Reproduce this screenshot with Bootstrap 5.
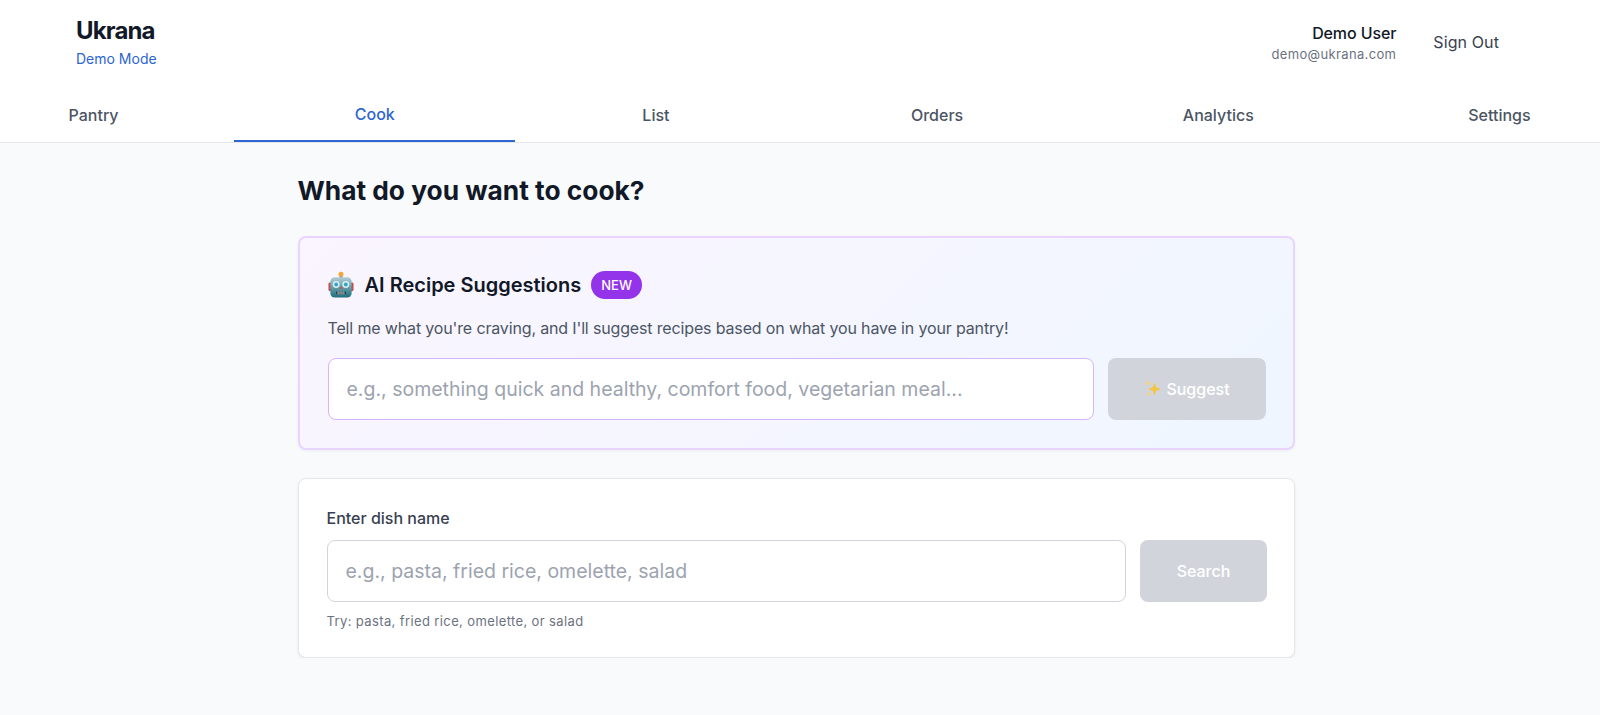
<!DOCTYPE html>
<html lang="en">
<head>
  <meta charset="UTF-8" />
  <title>Ukrana - Cook</title>
  <link href="https://cdn.jsdelivr.net/npm/bootstrap@5.3.3/dist/css/bootstrap.min.css" rel="stylesheet">
  <style>
    body { font-family: Inter, "Liberation Sans", sans-serif; background: #f9fafb; color: #111827; overflow-x: hidden; }
    .top-head { background: #fff; border-bottom: 1px solid #e5e7eb; height: 143px; overflow: hidden; }
    .brand-row { height: 84px; padding: 16px 85px 0 76px; }
    .brand-name { font-size: 24px; line-height: 30px; font-weight: 700; letter-spacing: -.85px; color: #111827; }
    .brand-mode { font-size: 14px; line-height: 20px; margin-top: 3px; color: #2d65d1; }
    .user-block { margin-top: 6px; }
    .user-name { font-size: 16px; line-height: 22px; font-weight: 500; letter-spacing: -.1px; }
    .user-mail { font-size: 13px; line-height: 20px; color: #6b7280; letter-spacing: .35px; }
    .signout { font-size: 16px; line-height: 24px; font-weight: 400; color: #374151; border: 0; padding: 8px 16px; margin: 4px 0 0 21px; letter-spacing: .1px; }
    .tab-row { margin: 0 -40px 0 -47px; height: 58px; }
    .tab-row .nav-link { flex: 1 1 0; height: 58px; padding: 19px 0 0; text-align: center; font-size: 16px; line-height: 24px; font-weight: 500; color: #4b5563; }
    .tab-row .nav-link.active { color: #2d65d1; padding-top: 18px; border-bottom: 2px solid #2d65d1; }
    .page-wrap { width: 997.5px; margin-left: 297.5px; }
    .page-title { font-size: 26.3px; line-height: 36px; font-weight: 700; margin: 30px 0 27px; color: #111827; }
    .ai-box { border: 2px solid #e9d5ff; border-radius: 8px; background: linear-gradient(135deg, #faf5ff, #eff6ff); padding: 33px 27px 28px 28px; height: 214px; box-shadow: 0 1px 3px rgba(0,0,0,.06); }
    .robot-icon { margin: -2px 11px 0 0; }
    .ai-title { font-size: 20px; line-height: 28px; font-weight: 600; color: #111827; }
    .new-tag { background: #9333ea; color: #fff; font-size: 13px; line-height: 20px; font-weight: 500; padding: 4px 10px; border-radius: 14px; margin-left: 10px; }
    .ai-text { font-size: 16px; line-height: 24px; letter-spacing: -.15px; color: #4b5563; margin: 17px 0 18px; }
    .big-input { height: 62px; font-size: 19.5px; padding: 0 18px; border-radius: 8px; color: #111827; }
    .big-input::placeholder { color: #9ca3af; }
    .purple-line { border: 1px solid #d8b4fe; }
    .gray-line { border: 1px solid #d1d5db; }
    .input-row { gap: 14px; }
    .off-btn { height: 62px; background: #d1d5db; color: #fff; font-size: 16px; font-weight: 500; border: 0; border-radius: 8px; }
    .off-btn:disabled { background: #d1d5db; color: #fff; opacity: 1; }
    .suggest-btn { width: 158px; flex: none; }
    .search-btn { width: 127px; flex: none; }
    .dish-box { margin-top: 28px; height: 180px; border: 1px solid #e5e7eb; border-radius: 8px; padding: 27px 27px 28px 28px; box-shadow: 0 1px 3px rgba(0,0,0,.08); }
    .dish-label { font-size: 16px; line-height: 24px; font-weight: 500; color: #374151; margin: 0 0 10px; }
    .dish-hint { font-size: 13px; line-height: 20px; color: #6b7280; margin-top: 9px; letter-spacing: .38px; }
  </style>
</head>
<body>
  <header class="top-head">
    <div class="brand-row d-flex justify-content-between align-items-start">
      <div>
        <div class="brand-name">Ukrana</div>
        <div class="brand-mode">Demo Mode</div>
      </div>
      <div class="d-flex align-items-center">
        <div class="text-end user-block">
          <div class="user-name">Demo User</div>
          <div class="user-mail">demo@ukrana.com</div>
        </div>
        <button class="btn signout">Sign Out</button>
      </div>
    </div>
    <nav class="nav tab-row flex-nowrap">
      <a class="nav-link" href="#">Pantry</a>
      <a class="nav-link active" href="#">Cook</a>
      <a class="nav-link" href="#">List</a>
      <a class="nav-link" href="#">Orders</a>
      <a class="nav-link" href="#">Analytics</a>
      <a class="nav-link" href="#">Settings</a>
    </nav>
  </header>

  <main class="page-wrap">
    <h1 class="page-title">What do you want to cook?</h1>

    <section class="ai-box">
      <div class="d-flex align-items-center">
        <!-- robot emoji -->
        <svg width="26" height="27" viewBox="0 0 26 28" class="robot-icon">
          <defs>
            <linearGradient id="robotHead" x1="0" y1="0" x2="0" y2="1">
              <stop offset="0" stop-color="#b4cdd5"/><stop offset=".55" stop-color="#5d9aa6"/><stop offset="1" stop-color="#1f6f7c"/>
            </linearGradient>
          </defs>
          <rect x="11.600" y="3" width="3" height="5" fill="#8a8f94"/>
          <circle cx="13" cy="3.400" r="2.600" fill="#f2a93b"/>
          <rect x="0" y="12" width="4" height="9" rx="1.500" fill="#c0504d"/>
          <rect x="22" y="12" width="4" height="9" rx="1.500" fill="#c0504d"/>
          <rect x="2" y="6.500" width="22" height="21" rx="4.500" fill="url(#robotHead)"/>
          <circle cx="8" cy="14" r="3.600" fill="#dcecef"/>
          <circle cx="18" cy="14" r="3.600" fill="#dcecef"/>
          <circle cx="8" cy="14" r="2" fill="#2fa9c4"/>
          <circle cx="18" cy="14" r="2" fill="#2fa9c4"/>
          <path d="M13 15.500l1.800 3h-3.600z" fill="#c0504d"/>
          <rect x="8" y="21" width="10" height="3.400" rx="1" fill="#20363c"/>
          <path d="M10 21v3.400M12 21v3.400M14 21v3.400M16 21v3.400" stroke="#dcecef" stroke-width=".9"/>
        </svg>
        <h2 class="ai-title mb-0">AI Recipe Suggestions</h2>
        <span class="new-tag">NEW</span>
      </div>
      <p class="ai-text">Tell me what you're craving, and I'll suggest recipes based on what you have in your pantry!</p>
      <div class="d-flex input-row">
        <input class="form-control big-input purple-line" placeholder="e.g., something quick and healthy, comfort food, vegetarian meal...">
        <button class="btn off-btn suggest-btn d-flex align-items-center justify-content-center" disabled>
          <svg width="18" height="18" viewBox="0 0 18 18" class="me-1">
            <path d="M10.500 2.500l1.800 4.700L17 9l-4.700 1.800L10.500 15.500l-1.800-4.700L4 9l4.700-1.800z" fill="#f6c445"/>
            <path d="M4 0l.8 2.400L7 3.200l-2.200.8L4 6.500l-.8-2.500L1 3.200l2.200-.8z" fill="#f7d56e"/>
            <path d="M4.500 11.500l.7 1.800L7 14l-1.800.7L4.500 16.500l-.7-1.800L2 14l1.800-.7z" fill="#f7d56e"/>
          </svg>
          Suggest
        </button>
      </div>
    </section>

    <section class="dish-box bg-white">
      <label class="dish-label d-block" for="dish">Enter dish name</label>
      <div class="d-flex input-row">
        <input id="dish" class="form-control big-input gray-line" placeholder="e.g., pasta, fried rice, omelette, salad">
        <button class="btn off-btn search-btn" disabled>Search</button>
      </div>
      <div class="dish-hint">Try: pasta, fried rice, omelette, or salad</div>
    </section>
  </main>

  <script src="https://cdn.jsdelivr.net/npm/bootstrap@5.3.3/dist/js/bootstrap.bundle.min.js"></script>
</body>
</html>
